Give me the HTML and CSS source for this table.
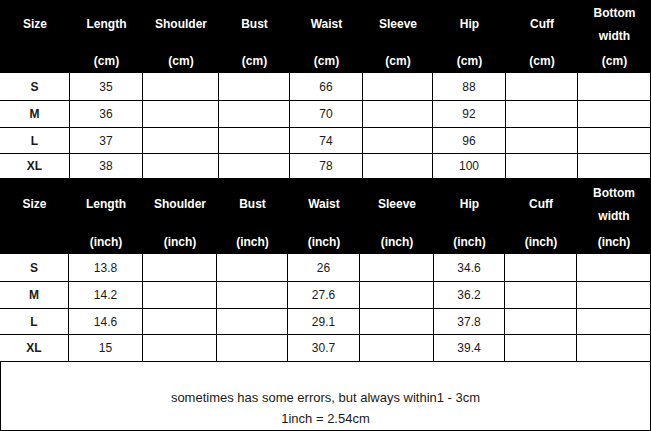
FILE: index.html
```html
<!DOCTYPE html>
<html>
<head>
<meta charset="utf-8">
<link rel="stylesheet" href="styles.css">
</head>
<body>
<div class="sheet">
  <div class="tbl tbl-cm">
    <div class="hd"><span class="lbl">Size</span><span class="unit"></span></div>
    <div class="hd"><span class="lbl">Length</span><span class="unit">(cm)</span></div>
    <div class="hd"><span class="lbl">Shoulder</span><span class="unit">(cm)</span></div>
    <div class="hd"><span class="lbl">Bust</span><span class="unit">(cm)</span></div>
    <div class="hd"><span class="lbl">Waist</span><span class="unit">(cm)</span></div>
    <div class="hd"><span class="lbl">Sleeve</span><span class="unit">(cm)</span></div>
    <div class="hd"><span class="lbl">Hip</span><span class="unit">(cm)</span></div>
    <div class="hd"><span class="lbl">Cuff</span><span class="unit">(cm)</span></div>
    <div class="hd"><span class="lbl two">Bottom<br>width</span><span class="unit">(cm)</span></div>

    <div class="c r1 sz">S</div><div class="c r1">35</div><div class="c r1"></div><div class="c r1"></div><div class="c r1">66</div><div class="c r1"></div><div class="c r1">88</div><div class="c r1"></div><div class="c r1"></div>
    <div class="c r2 sz">M</div><div class="c r2">36</div><div class="c r2"></div><div class="c r2"></div><div class="c r2">70</div><div class="c r2"></div><div class="c r2">92</div><div class="c r2"></div><div class="c r2"></div>
    <div class="c r3 sz">L</div><div class="c r3">37</div><div class="c r3"></div><div class="c r3"></div><div class="c r3">74</div><div class="c r3"></div><div class="c r3">96</div><div class="c r3"></div><div class="c r3"></div>
    <div class="c r4 sz">XL</div><div class="c r4">38</div><div class="c r4"></div><div class="c r4"></div><div class="c r4">78</div><div class="c r4"></div><div class="c r4">100</div><div class="c r4"></div><div class="c r4"></div>
  </div>

  <div class="tbl tbl-in">
    <div class="hd"><span class="lbl">Size</span><span class="unit"></span></div>
    <div class="hd"><span class="lbl">Length</span><span class="unit">(inch)</span></div>
    <div class="hd"><span class="lbl">Shoulder</span><span class="unit">(inch)</span></div>
    <div class="hd"><span class="lbl">Bust</span><span class="unit">(inch)</span></div>
    <div class="hd"><span class="lbl">Waist</span><span class="unit">(inch)</span></div>
    <div class="hd"><span class="lbl">Sleeve</span><span class="unit">(inch)</span></div>
    <div class="hd"><span class="lbl">Hip</span><span class="unit">(inch)</span></div>
    <div class="hd"><span class="lbl">Cuff</span><span class="unit">(inch)</span></div>
    <div class="hd"><span class="lbl two">Bottom<br>width</span><span class="unit">(inch)</span></div>

    <div class="c r1 sz">S</div><div class="c r1">13.8</div><div class="c r1"></div><div class="c r1"></div><div class="c r1">26</div><div class="c r1"></div><div class="c r1">34.6</div><div class="c r1"></div><div class="c r1"></div>
    <div class="c r2 sz">M</div><div class="c r2">14.2</div><div class="c r2"></div><div class="c r2"></div><div class="c r2">27.6</div><div class="c r2"></div><div class="c r2">36.2</div><div class="c r2"></div><div class="c r2"></div>
    <div class="c r3 sz">L</div><div class="c r3">14.6</div><div class="c r3"></div><div class="c r3"></div><div class="c r3">29.1</div><div class="c r3"></div><div class="c r3">37.8</div><div class="c r3"></div><div class="c r3"></div>
    <div class="c r4 sz">XL</div><div class="c r4">15</div><div class="c r4"></div><div class="c r4"></div><div class="c r4">30.7</div><div class="c r4"></div><div class="c r4">39.4</div><div class="c r4"></div><div class="c r4"></div>
  </div>

  <div class="note">
    <p>sometimes has some errors, but always within1 - 3cm</p>
    <p>1inch = 2.54cm</p>
  </div>
</div>
</body>
</html>
```
FILE: styles.css
```css
html, body {
  margin: 0;
  padding: 0;
  background: #fff;
}
body {
  font-family: "Liberation Sans", Arial, sans-serif;
  color: #1a1a1a;
}
.sheet {
  width: 651px;
}
.tbl {
  display: grid;
}
.tbl-cm {
  grid-template-columns: 70px 73px 76px 71px 73px 70px 73px 72px 73px;
  grid-template-rows: 73px 28px 27px 26px 25px;
}
.tbl-in {
  grid-template-columns: 69px 74px 74px 71px 72px 74px 71px 72px 74px;
  grid-template-rows: 75px 28px 27px 26px 27px;
}
.hd {
  background: #000;
  color: #fff;
  font-weight: bold;
  font-size: 12px;
  display: flex;
  flex-direction: column;
}
.hd .lbl {
  height: 49px;
  display: flex;
  align-items: center;
  justify-content: center;
  text-align: center;
  line-height: 23px;
}
.tbl-in .hd .lbl {
  height: 51px;
}
.hd .unit {
  flex: 1;
  display: flex;
  align-items: center;
  justify-content: center;
}
.c {
  border-right: 1px solid #000;
  border-bottom: 1px solid #000;
  display: flex;
  align-items: center;
  justify-content: center;
  font-size: 12px;
}
.c.sz {
  font-weight: bold;
}
.note {
  height: 68px;
  border: 1px solid #000;
  border-top: none;
  width: 649px;
  display: flex;
  flex-direction: column;
  align-items: center;
  justify-content: flex-end;
  font-size: 13px;
}
.note p {
  margin: 0;
  line-height: 21px;
}
.note p:last-child {
  margin-bottom: 1px;
}
```
